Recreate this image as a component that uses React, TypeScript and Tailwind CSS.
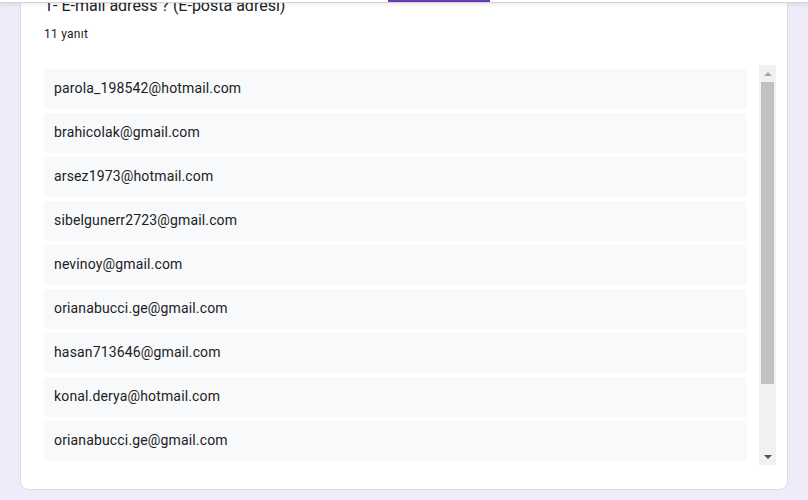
const emails = [
  'parola_198542@hotmail.com',
  'brahicolak@gmail.com',
  'arsez1973@hotmail.com',
  'sibelgunerr2723@gmail.com',
  'nevinoy@gmail.com',
  'orianabucci.ge@gmail.com',
  'hasan713646@gmail.com',
  'konal.derya@hotmail.com',
  'orianabucci.ge@gmail.com',
];

const App = () => {
  return (
    <div className="relative h-[500px] w-[808px] overflow-hidden bg-[#f0ebf8] font-['Roboto',sans-serif] text-[#202124]">
      {/* sticky tab bar, only its bottom edge shows */}
      <div className="absolute left-0 right-0 top-0 z-10 h-[3px] border-b border-[#d3d3d3] bg-white shadow-[0_1px_4px_rgba(0,0,0,0.12)]">
        <div className="ml-[388px] h-[2px] w-[102px] bg-[#673ab7]" />
      </div>

      <div className="mx-[20px] -mt-[31px] rounded-lg border border-[#dadce0] bg-white pb-[24px] pl-[23px] pr-[11px] pt-[24px]">
        <div className="text-[16px] leading-[24px]">1- E-mail adress ? (E-posta adresi)</div>
        <div className="mt-2 text-[12px] leading-[16px] tracking-[0.25px]">11 yanıt</div>

        <div className="mt-[23px] flex h-[400px]">
          <div className="mr-3 flex flex-1 flex-col gap-1 overflow-hidden pt-1">
            {emails.map((email, i) => (
              <div key={i} className="flex h-10 shrink-0 items-center rounded bg-[#f8f9fa] pb-[2px] pl-[10px] text-[14px] tracking-[0.15px]">
                {email}
              </div>
            ))}
          </div>

          {/* scrollbar */}
          <div className="flex w-[17px] flex-col bg-[#f1f1f1]">
            <div className="flex h-[17px] items-center justify-center">
              <div className="h-0 w-0 border-x-[4px] border-b-[4px] border-x-transparent border-b-[#a3a3a3]" />
            </div>
            <div className="mx-[2px] h-[302px] bg-[#c1c1c1]" />
            <div className="flex-1" />
            <div className="flex h-[17px] items-center justify-center">
              <div className="h-0 w-0 border-x-[4px] border-t-[4px] border-x-transparent border-t-[#505050]" />
            </div>
          </div>
        </div>
      </div>
    </div>
  );
};

export default App;
